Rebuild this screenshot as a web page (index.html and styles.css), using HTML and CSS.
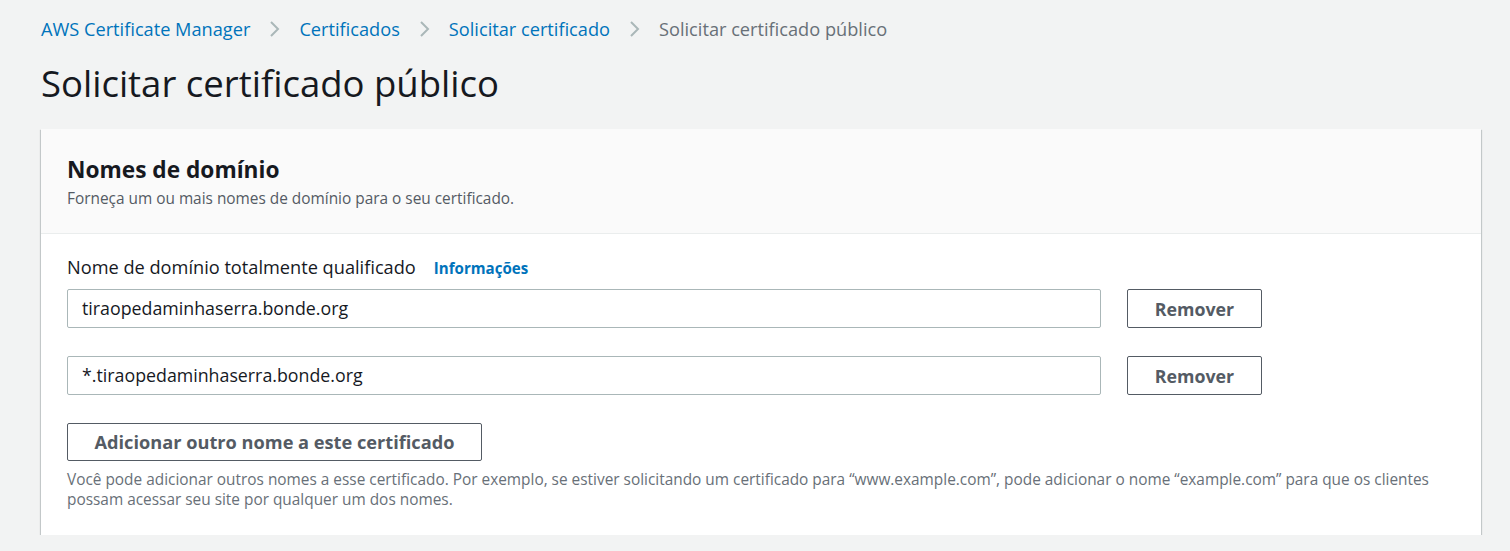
FILE: index.html
```html
<!DOCTYPE html>
<html lang="pt-BR">
<head>
<meta charset="utf-8">
<title>Solicitar certificado público</title>
<link rel="stylesheet" href="styles.css">
</head>
<body>
<div class="page">
  <nav class="breadcrumbs">
    <a class="crumb" href="#">AWS Certificate Manager</a>
    <svg class="sep" width="14" height="20" viewBox="0 0 14 20"><path d="M3 3 L10 10 L3 17" fill="none" stroke="#aab7b8" stroke-width="2"/></svg>
    <a class="crumb" href="#">Certificados</a>
    <svg class="sep" width="14" height="20" viewBox="0 0 14 20"><path d="M3 3 L10 10 L3 17" fill="none" stroke="#aab7b8" stroke-width="2"/></svg>
    <a class="crumb" href="#">Solicitar certificado</a>
    <svg class="sep" width="14" height="20" viewBox="0 0 14 20"><path d="M3 3 L10 10 L3 17" fill="none" stroke="#aab7b8" stroke-width="2"/></svg>
    <span class="crumb current">Solicitar certificado público</span>
  </nav>
  <h1 class="title">Solicitar certificado público</h1>
  <section class="card">
    <header class="card-header">
      <h2 class="card-title">Nomes de domínio</h2>
      <p class="card-desc">Forneça um ou mais nomes de domínio para o seu certificado.</p>
    </header>
    <div class="card-body">
      <div class="label-row">
        <span class="label">Nome de domínio totalmente qualificado</span>
        <a class="info" href="#">Informações</a>
      </div>
      <div class="field-row">
        <div class="input">tiraopedaminhaserra.bonde.org</div>
        <button class="btn btn-remove">Remover</button>
      </div>
      <div class="field-row">
        <div class="input">*.tiraopedaminhaserra.bonde.org</div>
        <button class="btn btn-remove">Remover</button>
      </div>
      <button class="btn btn-add">Adicionar outro nome a este certificado</button>
      <p class="help">Você pode adicionar outros nomes a esse certificado. Por exemplo, se estiver solicitando um certificado para “www.example.com”, pode adicionar o nome “example.com” para que os clientes possam acessar seu site por qualquer um dos nomes.</p>
    </div>
  </section>
</div>
</body>
</html>
```
FILE: styles.css
```css
* { box-sizing: border-box; }
html, body { margin: 0; padding: 0; }
body {
  background: #f2f3f3;
  font-family: "Open Sans", "Noto Sans", sans-serif;
  color: #16191f;
}
.page {
  padding: 14px 29px 0 41px;
}
.breadcrumbs {
  display: flex;
  align-items: center;
  height: 30px;
  font-size: 18.2px;
}
.crumb { color: #0073bb; text-decoration: none; white-space: nowrap; }
.crumb.current { color: #687078; }
.sep { margin: 0 17px 0 18px; }
.title {
  margin: 17px 0 0;
  font-size: 36.5px;
  font-weight: 400;
  line-height: 44px;
  color: #16191f;
}
.card {
  margin-top: 24px;
  background: #fff;
  box-shadow: 0 1px 1px 0 rgba(0,28,36,0.3), 1px 1px 1px 0 rgba(0,28,36,0.15), -1px 1px 1px 0 rgba(0,28,36,0.15);
}
.card-header {
  background: #fafafa;
  border-bottom: 1px solid #eaeded;
  padding: 26px 26px 24px;
}
.card-title {
  margin: 0;
  font-size: 22.7px;
  font-weight: 700;
  line-height: 30px;
}
.card-desc {
  margin: 4px 0 0;
  font-size: 15.4px;
  line-height: 20px;
  color: #545b64;
}
.card-body {
  padding: 21px 26px 25px;
}
.label-row {
  display: flex;
  align-items: baseline;
  gap: 18px;
  line-height: 24px;
}
.label { font-size: 18.2px; }
.info { font-size: 15.1px; font-weight: 700; color: #0073bb; text-decoration: none; }
.field-row {
  display: flex;
  align-items: center;
  gap: 26px;
  margin-top: 9px;
  margin-bottom: 28px;
}
.field-row + .field-row { margin-top: 0; }
.input {
  width: 1034px;
  height: 39px;
  border: 1px solid #aab7b8;
  border-radius: 2px;
  padding: 0 14px;
  font-size: 17.8px;
  line-height: 37px;
  color: #16191f;
}
.btn {
  font-family: inherit;
  background: #fff;
  border: 1px solid #545b64;
  border-radius: 2px;
  color: #545b64;
  font-size: 17.8px;
  font-weight: 700;
  padding: 0;
}
.btn-remove { width: 135px; height: 39px; }
.btn-add { width: 415px; height: 38px; display: block; font-size: 18.2px; }
.help {
  margin: 9px 0 0;
  font-size: 15.4px;
  line-height: 20px;
  color: #687078;
}
```
